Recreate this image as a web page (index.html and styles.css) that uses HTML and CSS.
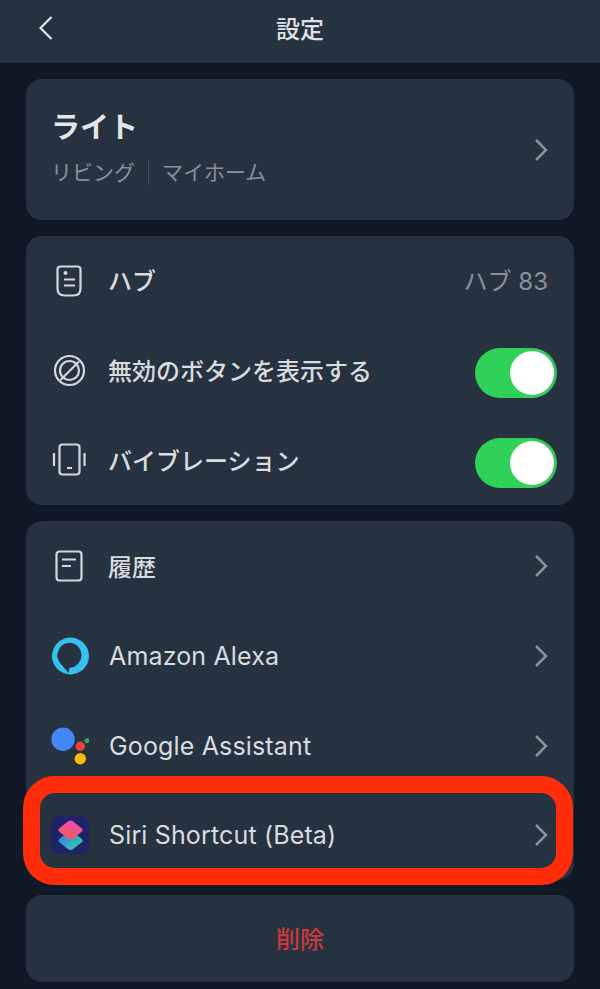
FILE: index.html
```html
<!DOCTYPE html>
<html lang="ja">
<head>
    <meta charset="UTF-8">
    <meta name="viewport" content="width=device-width, initial-scale=1.0">
    <title>設定</title>
    <link rel="stylesheet" href="styles.css">
</head>
<body>
    <header class="topbar">
        <svg class="back" width="16" height="26" viewBox="0 0 16 26"><path d="M13.5 2 2.500 13l11 11"/></svg>
        <h1>設定</h1>
    </header>

    <main class="content">
        <section class="card device">
            <div class="device-info">
                <div class="device-name">ライト</div>
                <div class="device-place"><span>リビング</span><span class="place-home">マイホーム</span></div>
            </div>
            <svg class="chevron" width="14" height="24" viewBox="0 0 14 24"><path d="M2 2l10 10L2 22"/></svg>
        </section>

        <section class="card">
            <div class="row">
                <svg class="icon" width="36" height="36" viewBox="0 0 36 36"><path d="M6.500 6.500q0-3 3-3h17q3 0 3 3v19q0 7-7 7h-9q-7 0-7-7z"/><circle class="dot" cx="14.500" cy="10" r="2"/><path d="M13 16.500h11M13 22.500h11"/></svg>
                <span class="label">ハブ</span>
                <span class="value">ハブ 83</span>
            </div>
            <div class="row">
                <svg class="icon" width="36" height="36" viewBox="0 0 36 36"><circle cx="18.500" cy="17.500" r="14.500"/><circle cx="18.500" cy="17.500" r="9.500"/><path d="M9.500 27 28 8.500"/></svg>
                <span class="label">無効のボタンを表示する</span>
                <span class="switch"><span class="knob"></span></span>
            </div>
            <div class="row">
                <svg class="icon" width="36" height="36" viewBox="0 0 36 36"><rect x="8.500" y="2.500" width="20" height="30" rx="3"/><path d="M16 26h5M3 11v13M33.500 11v13"/></svg>
                <span class="label">バイブレーション</span>
                <span class="switch"><span class="knob"></span></span>
            </div>
        </section>

        <section class="card">
            <div class="row">
                <svg class="icon" width="36" height="36" viewBox="0 0 36 36"><rect x="5.500" y="3.500" width="25" height="29" rx="3"/><path d="M11 11.500h14M11 18h9"/></svg>
                <span class="label">履歴</span>
                <svg class="chevron" width="14" height="24" viewBox="0 0 14 24"><path d="M2 2l10 10L2 22"/></svg>
            </div>
            <div class="row">
                <svg class="logo" width="38" height="38" viewBox="0 0 38 38"><path fill="#35c1ef" fill-rule="evenodd" d="M19.500.500a18.500 18.500 0 1 1 0 37 18.500 18.500 0 0 1 0-37zM19.300 5.700a12.600 12.600 0 0 0-9.800 20.800l8 9.500 1-5.200a12.600 12.600 0 0 0 .8-25.100z"/></svg>
                <span class="label latin">Amazon Alexa</span>
                <svg class="chevron" width="14" height="24" viewBox="0 0 14 24"><path d="M2 2l10 10L2 22"/></svg>
            </div>
            <div class="row">
                <svg class="logo" width="38" height="38" viewBox="0 0 38 38"><circle cx="12" cy="12.300" r="11.700" fill="#4285f4"/><circle cx="29.300" cy="19.300" r="4.700" fill="#ea4335"/><circle cx="36" cy="13.700" r="2.500" fill="#34a853"/><circle cx="29.300" cy="31.700" r="5.700" fill="#fbbc05"/></svg>
                <span class="label latin">Google Assistant</span>
                <svg class="chevron" width="14" height="24" viewBox="0 0 14 24"><path d="M2 2l10 10L2 22"/></svg>
            </div>
            <div class="row">
                <svg class="logo" width="38" height="38" viewBox="0 0 38 38">
                    <defs>
                        <linearGradient id="siriTop" x1="0.700" y1="0" x2="0.300" y2="1"><stop offset="0" stop-color="#ee48b8"/><stop offset="1" stop-color="#f2604f"/></linearGradient>
                        <linearGradient id="siriBottom" x1="0" y1="0.200" x2="0.800" y2="1"><stop offset="0" stop-color="#3f6fee"/><stop offset="1" stop-color="#2fd6a2"/></linearGradient>
                    </defs>
                    <rect width="38" height="38" rx="8" fill="#1d2365"/>
                    <path fill="url(#siriBottom)" transform="translate(0 10.500)" d="M16.800 5.600q2.700-2 5.400 0l8.400 6.600q2.200 1.800 0 3.600l-8.400 6.600q-2.700 2-5.400 0l-8.400-6.600q-2.200-1.800 0-3.600z"/>
                    <path fill="url(#siriTop)" d="M16.800 5.600q2.700-2 5.400 0l8.400 6.600q2.200 1.800 0 3.600l-8.400 6.600q-2.700 2-5.400 0l-8.400-6.600q-2.200-1.800 0-3.600z"/>
                </svg>
                <span class="label latin">Siri Shortcut (Beta)</span>
                <svg class="chevron" width="14" height="24" viewBox="0 0 14 24"><path d="M2 2l10 10L2 22"/></svg>
            </div>
        </section>

        <section class="card delete">削除</section>
    </main>

    <div class="highlight"></div>
</body>
</html>
```

FILE: styles.css
```css
body {
    font-family: 'Inter', 'Noto Sans CJK JP', sans-serif;
    margin: 0;
    height: 989px;
    overflow: hidden;
    position: relative;
    background-color: #0f1824;
    color: #d9dcdf;
}
.topbar {
    height: 63px;
    background-color: #273241;
    border-bottom: 1px solid #1c2633;
    box-sizing: border-box;
    display: flex;
    align-items: center;
    justify-content: center;
    position: relative;
}
.topbar h1 {
    margin: 0 0 8px;
    font-size: 24px;
    font-weight: 500;
    color: #dfe1e3;
}
.back {
    position: absolute;
    left: 38px;
    top: 15px;
}
.back path {
    fill: none;
    stroke: #e4e6e8;
    stroke-width: 2.200;
}
.content {
    padding: 16px 26px 0;
    display: flex;
    flex-direction: column;
    gap: 16px;
}
.card {
    background-color: #273241;
    border-radius: 16px;
}
.device {
    height: 141px;
    box-sizing: border-box;
    padding: 0 26px;
    display: flex;
    align-items: center;
    justify-content: space-between;
}
.device-info {
    padding-bottom: 4px;
    margin-left: -1px;
}
.device-name {
    font-size: 29px;
    font-weight: 700;
    color: #e4e6e8;
    line-height: 36px;
    margin-bottom: 15px;
}
.device-place {
    display: flex;
    align-items: center;
    font-size: 21px;
    line-height: 24px;
    color: #8b9096;
}
.place-home {
    margin-left: 13px;
    padding-left: 13px;
    border-left: 1px solid #454e5b;
}
.row {
    height: 89.750px;
    display: flex;
    align-items: center;
    padding: 0 26px;
}
.icon {
    flex: none;
    margin-right: 21px;
    margin-left: -1px;
}
.icon path, .icon rect, .icon circle {
    fill: none;
    stroke: #d5d8db;
    stroke-width: 2.200;
}
.icon .dot {
    fill: #d5d8db;
    stroke: none;
}
.logo {
    flex: none;
    margin-right: 20px;
    margin-left: -1px;
}
.label {
    flex: 1;
    margin-bottom: 2px;
    font-size: 24px;
    font-weight: 500;
    color: #d9dcdf;
}
.label.latin {
    margin-bottom: 0;
    font-size: 25px;
    font-weight: 400;
    letter-spacing: 0.150px;
}
.value {
    margin-bottom: 2px;
    font-size: 24px;
    color: #8b9096;
}
.chevron path {
    fill: none;
    stroke: #8d9197;
    stroke-width: 2.500;
}
.switch {
    width: 82px;
    height: 50px;
    margin-top: 5px;
    margin-right: -9px;
    border-radius: 25px;
    background: linear-gradient(90deg, #30d158 70%, #3cbf5e);
    display: flex;
    align-items: center;
    justify-content: flex-end;
    padding-right: 3px;
    box-sizing: border-box;
}
.knob {
    width: 44px;
    height: 44px;
    border-radius: 50%;
    background-color: #fff;
}
.delete {
    height: 87px;
    margin-top: -1px;
    padding-bottom: 2px;
    box-sizing: border-box;
    display: flex;
    align-items: center;
    justify-content: center;
    font-size: 24px;
    font-weight: 500;
    color: #c8393b;
}
.highlight {
    position: absolute;
    left: 23px;
    top: 776px;
    width: 550px;
    height: 109px;
    box-sizing: border-box;
    border: 17px solid #ff2d0a;
    border-radius: 32px;
}
```
